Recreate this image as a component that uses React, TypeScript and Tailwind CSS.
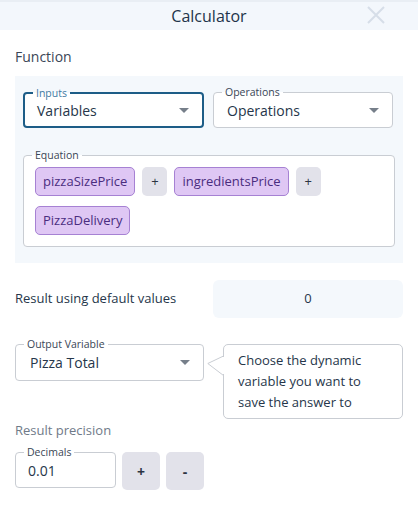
import type { ReactNode } from "react";

const font = { fontFamily: '"Open Sans", "Noto Sans", sans-serif' };

function Caret() {
  return (
    <svg width="10" height="5" viewBox="0 0 10 5" className="shrink-0">
      <path d="M0 0h10L5 5z" fill="#767f8a" />
    </svg>
  );
}

function FloatBox({
  label,
  children,
  className = "",
  focused = false,
  labelBg = "bg-white",
}: {
  label: string;
  children: ReactNode;
  className?: string;
  focused?: boolean;
  labelBg?: string;
}) {
  return (
    <div
      className={`relative rounded-[4px] bg-white ${
        focused ? "border-2 border-[#1d5d87]" : "border border-[#c9cdd3]"
      } ${className}`}
    >
      <span
        className={`absolute left-[8px] top-[-8px] px-[3px] text-[10.5px] leading-[14px] ${labelBg} ${
          focused ? "text-[#3f7aa3]" : "text-[#3a4656]"
        }`}
      >
        {label}
      </span>
      {children}
    </div>
  );
}

function Chip({ text }: { text: string }) {
  return (
    <span className="flex h-[29px] items-center rounded-[5px] border border-[#a681d3] bg-[#dfc7f4] px-[7px] text-[13px] text-[#4a2d7f]">
      {text}
    </span>
  );
}

function Op() {
  return (
    <span className="flex h-[29px] w-[25px] items-center justify-center rounded-[5px] bg-[#e2e2ea] text-[13px] text-[#2c3442]">
      +
    </span>
  );
}

export default function App() {
  const panelLabel = "bg-[linear-gradient(to_bottom,#f4f8fc_50%,#ffffff_50%)]";
  return (
    <div style={font} className="h-[507px] w-[418px] overflow-hidden bg-white text-[#26364a]">
      <header className="relative flex h-[30px] items-center justify-center border-t-2 border-[#e9eef4] bg-[#f3f7fc]">
        <h1 className="text-[16px] leading-none text-[#22334a]">Calculator</h1>
        <svg
          width="18"
          height="18"
          viewBox="0 0 18 18"
          className="absolute right-[33px] top-[4px]"
        >
          <path d="M1 1l16 16M17 1L1 17" stroke="#d6dee8" strokeWidth="2" />
        </svg>
      </header>

      <div className="px-[15px]">
        <p className="mt-[17px] text-[14px] leading-[20px] text-[#3a4656]">Function</p>

        <div className="mt-[9px] bg-[#f4f8fc] px-[8px] pb-[16px] pt-[16px]">
          <div className="flex gap-[9px]">
            <FloatBox label="Inputs" focused labelBg={panelLabel} className="w-[181px]">
              <div className="flex h-[32px] items-center justify-between pl-[12px] pr-[13px] text-[14px]">
                Variables
                <Caret />
              </div>
            </FloatBox>
            <FloatBox label="Operations" labelBg={panelLabel} className="w-[180px]">
              <div className="flex h-[34px] items-center justify-between pl-[13px] pr-[13px] text-[14px]">
                Operations
                <Caret />
              </div>
            </FloatBox>
          </div>

          <FloatBox label="Equation" labelBg={panelLabel} className="mt-[27px]">
            <div className="flex flex-wrap gap-x-[7px] gap-y-[10px] px-[11px] pb-[11px] pt-[11px]">
              <Chip text="pizzaSizePrice" />
              <Op />
              <Chip text="ingredientsPrice" />
              <Op />
              <Chip text="PizzaDelivery" />
            </div>
          </FloatBox>
        </div>

        <div className="mt-[17px] flex items-center">
          <span className="w-[198px] text-[13px]">Result using default values</span>
          <div className="flex h-[38px] flex-1 items-center justify-center rounded-[6px] bg-[#f4f8fc] text-[13px]">
            0
          </div>
        </div>

        <div className="mt-[26px] flex items-start">
          <FloatBox label="Output Variable" className="w-[189px]">
            <div className="flex h-[35px] items-center justify-between pl-[14px] pr-[13px] text-[14px]">
              Pizza Total
              <Caret />
            </div>
          </FloatBox>
          <div className="relative ml-[19px] flex-1">
            <svg
              width="17"
              height="26"
              viewBox="0 0 17 26"
              className="absolute left-[-16px] top-[6px]"
            >
              <path d="M16.5 0.5V25.5L0.8 13.5L16.5 6" fill="white" stroke="#c9cdd3" />
              <path d="M16.5 7V24" stroke="white" strokeWidth="1.5" />
            </svg>
            <div className="rounded-[5px] border border-[#c9cdd3] py-[5px] pl-[14px] pr-[20px] text-[13px] leading-[21px]">
              Choose the dynamic variable you want to save the answer to
            </div>
          </div>
        </div>

        <p className="mt-[1px] text-[13px] leading-[20px] text-[#6f7a88]">Result precision</p>

        <div className="mt-[12px] flex items-start gap-[6px]">
          <FloatBox label="Decimals" className="w-[101px]">
            <div className="flex h-[34px] items-center pl-[12px] text-[14px]">0.01</div>
          </FloatBox>
          <button className="flex h-[38px] w-[38px] items-center justify-center rounded-[5px] bg-[#e2e2ea] text-[14px] font-bold text-[#2c3442]">
            +
          </button>
          <button className="flex h-[38px] w-[38px] items-center justify-center rounded-[5px] bg-[#e2e2ea] text-[14px] font-bold text-[#2c3442]">
            -
          </button>
        </div>
      </div>
    </div>
  );
}
